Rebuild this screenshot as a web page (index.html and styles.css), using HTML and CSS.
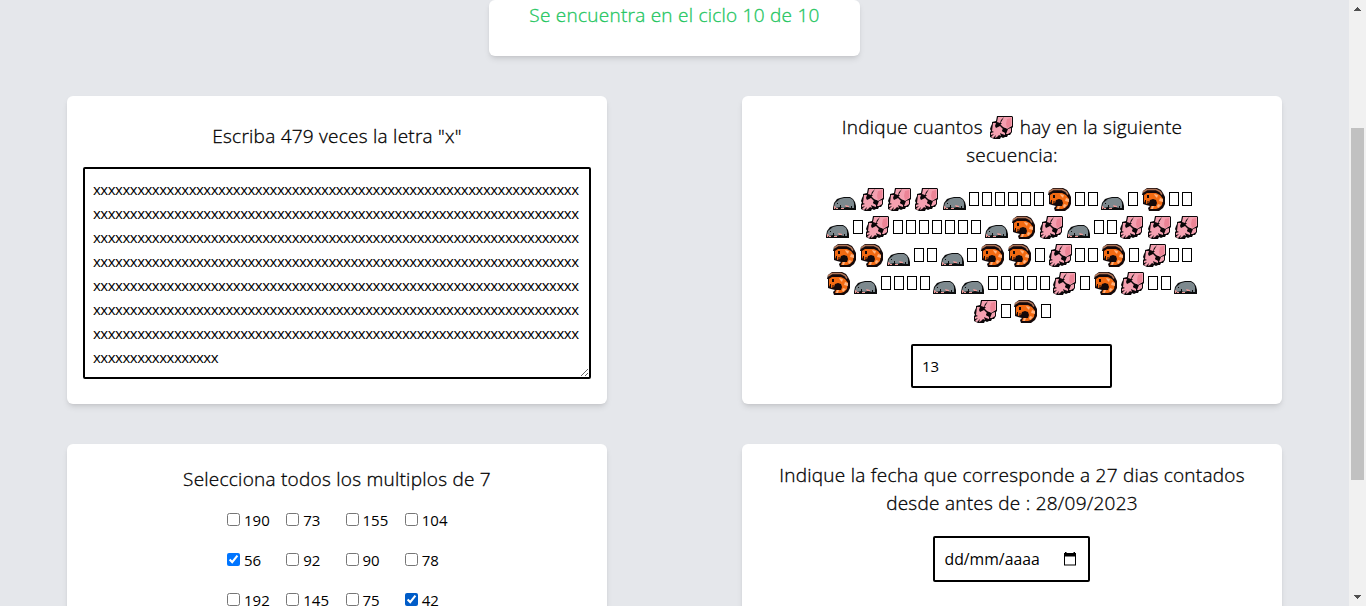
FILE: index.html
```html
<!DOCTYPE html>
<html lang="es">
<head>
<meta charset="utf-8">
<title>Ciclos</title>
<link rel="stylesheet" href="styles.css">
</head>
<body>
<svg class="sprites" aria-hidden="true">
  <symbol id="squid" viewBox="0 0 23 23">
    <path fill="#0b0709" d="M7 0h15l1 1v10l-1 1v4l-2 3h-2l-1 2h-2l-2 1-2-1-1 2H4l-2-1-2-1v-5l1-1-1-2 1-3 1-2V6l4-1z"/>
    <path fill="#f4a0b0" d="M8 1h6l-3 3-1 3-3-1zM14 1h8v9l-5 3-4-2-3-3zM3 7h3l-1 3 1 2 4-2 3 3-1 2 3 2v2l-3-1-2-1 1 3-2-1-2 2-2 1 1-3-3 3-2-1 3-3-3 1v-2l3-1-2-1zM18 13l3-1v4l-3 2h-2z"/>
    <path fill="#ec8496" d="M17 3l4-1v8l-4 2-1-4z"/>
    <path fill="#0b0709" d="M6 9l2-2 4 0-2 2-3 2zM12 14l3-2 2 1-2 3h-2z"/>
  </symbol>
  <symbol id="shrimp" viewBox="0 0 23 23">
    <path fill="#14090a" d="M1 3l4-3h10l4 2 2 3 2 4v7l-2 4-4 3H7l-1-3 2-2-4-1-3-1V7H0z"/>
    <path fill="#f36a12" d="M2 7l3-2h9l4 2 3 4-1 6-3 3-3 1H8l1-3h5l1-3-1-3-3-1-3 1-1 3-3 1-1-3-1 2z"/>
    <path fill="#ffb17d" d="M12 6l4 1-1 3-2-2zM18 10l3 1v3l-4-1zM16 16l3 1-3 3-1-2zM10 18h2l-1 3H9z"/>
    <path fill="none" stroke="#b07558" stroke-width="1.500" d="M1 4l4-2.500h9l4 2 2 3"/>
    <path fill="none" stroke="#14090a" d="M3 5l3-1h9l3 2M3.500 12v4M6 13v4M8.500 13v4"/>
    <path fill="#14090a" d="M5 7h2v3H5zM10 12h3l1 2-1 3h-3z"/>
  </symbol>
  <symbol id="mole" viewBox="0 0 23 14">
    <path fill="#0c0d0e" d="M7 1l4-1h6l3 2 2 3 1 4v4H0v-2l1-5 3-4z"/>
    <path fill="#7d898e" d="M7 2l4-1h6l3 2 1 3v5l-3 0-4-1-4 1-3-1-4 1-2-1 1-4z"/>
    <path fill="#f19a98" d="M1 9l2 1-1 2H1zM12 8l4 1v1h-3zM8 11h3v1H8zM3 11h2v1H3z"/>
    <path fill="#0c0d0e" d="M4 6h1v1H4zM7 8h1v3H7zM18 9h1v2h-1z"/>
  </symbol>
</svg>
<div class="window">
  <main class="page">
    <section class="card status"><p class="title">Se encuentra en el ciclo 10 de 10</p></section>
    <div class="grid">
      <section class="card write">
        <p class="title">Escriba 479 veces la letra "x"</p>
        <textarea class="field area" id="area"></textarea>
      </section>
      <section class="card count">
        <p class="title">Indique cuantos <svg class="squid"><use href="#squid"/></svg> hay en la siguiente<br>secuencia:</p>
        <div class="sequence" id="sequence"></div>
        <input class="field number" type="text" value="13">
      </section>
      <section class="card multiples">
        <p class="title">Selecciona todos los multiplos de 7</p>
        <div class="options">
          <label><input type="checkbox">190</label>
          <label><input type="checkbox">73</label>
          <label><input type="checkbox">155</label>
          <label><input type="checkbox">104</label>
          <label><input type="checkbox" checked>56</label>
          <label><input type="checkbox">92</label>
          <label><input type="checkbox">90</label>
          <label><input type="checkbox">78</label>
          <label><input type="checkbox">192</label>
          <label><input type="checkbox">145</label>
          <label><input type="checkbox">75</label>
          <label><input class="hovered" type="checkbox" checked>42</label>
        </div>
      </section>
      <section class="card date">
        <p class="title">Indique la fecha que corresponde a 27 dias contados<br>desde antes de : 28/09/2023</p>
        <div class="field datebox"><span>dd/mm/aaaa</span>
          <svg class="calendar" viewBox="0 0 14 14"><path d="M1 1h1V0h1.500v1h7V0H12v1h1v12.500H1zM2 4.500v8h10v-8z" fill-rule="evenodd"/></svg>
        </div>
      </section>
    </div>
  </main>
  <div class="scrollbar">
    <svg class="arrow" viewBox="0 0 7 4"><path d="M3 0h1v1h1v1h1v1h1v1H0V3h1V2h1V1h1z"/></svg>
    <div class="thumb"></div>
    <svg class="arrow" viewBox="0 0 7 4"><path d="M0 0h7v1H6v1H5v1H4v1H3V3H2V2H1V1H0z"/></svg>
  </div>
</div>
<script src="main.js"></script>
</body>
</html>
```
FILE: styles.css
```css
* { box-sizing: border-box; }
body { margin: 0; height: 606px; overflow: hidden; background: #e5e7eb; color: #000; font: 16px/24px "Open Sans", "Noto Sans", sans-serif; }
p { margin: 0; }
.sprites { display: none; }
.window { display: flex; height: 606px; overflow: hidden; }
.page { width: 1349px; height: 606px; overflow: hidden; }
.card { background: #fff; border-radius: 6px; box-shadow: 0 4px 6px -1px rgba(0,0,0,.1), 0 2px 4px -2px rgba(0,0,0,.1); }
.title { font-size: 19px; font-weight: 300; letter-spacing: .250px; -webkit-text-stroke: .3px currentColor; line-height: 28px; text-align: center; white-space: nowrap; }
.status { width: 371px; height: 56px; margin: 0 auto; padding-top: 1px; }
.status .title { color: #22c55e; }
.grid { display: grid; grid-template-columns: 540px 540px; grid-template-rows: 308px 308px; column-gap: 135px; row-gap: 40px; padding: 40px 67px; }
.grid .card { display: flex; flex-direction: column; align-items: center; padding: 16px; }
.field { border: 2px solid #000; border-radius: 2px; background: #fff; outline: 0; color: #000; font: inherit; }
.write .title { margin: 10px 0 17px; }
.area { display: block; width: 508px; height: 212px; padding: 8px; overflow: hidden; font-size: 15px; line-height: 24px; letter-spacing: -.495px; word-break: break-all; }
.count .title { padding-top: 1px; }
.squid, .shrimp { display: inline-block; width: 23px; height: 23px; margin: 0 2px; vertical-align: -5px; }
.title .squid { margin: 0 2px 0 1.500px; }
.sequence { margin: 16px 0 19px; }
.row { display: flex; justify-content: center; height: 28px; align-items: center; }
.row svg { flex: none; margin: 0 2.200px; }
.row .mole { width: 23px; height: 14px; margin-top: 9px; }
.box { width: 10px; height: 14px; margin: 0 1.500px; border: 1px solid #000; }
.number { width: 201px; height: 44px; margin-right: 1px; padding: 8px 9px; font-size: 15px; }
.multiples .title { margin-top: 5px; }
.options { display: grid; grid-template-columns: repeat(4, 59.250px); grid-auto-rows: 40px; width: 237px; margin: 7px 0 0 17px; }
.options label { display: flex; align-items: center; gap: 4px; font-size: 15px; }
.options input { width: 13px; height: 13px; margin: 0 0 2px; flex: none; accent-color: #0075ff; }
.options .hovered { accent-color: #005cc8; }
.date .title { padding-top: 1px; }
.datebox { display: flex; align-items: center; justify-content: space-between; width: 157px; height: 46px; margin: 19px 2px 0 0; padding: 0 11px 0 10px; font-size: 15.800px; }
.calendar { width: 14px; height: 14px; }
.scrollbar { width: 17px; height: 606px; background: #f1f1f1; display: flex; flex-direction: column; align-items: center; padding: 7px 0; }
.arrow { width: 7px; height: 4px; fill: #505050; flex: none; }
.thumb { width: 13px; height: 352px; margin: 117px 0 115px; background: #c1c1c1; flex: none; }
```
FILE: main.js
```js
// Letters: m = mole, s = squid, p = shrimp, . = empty glyph box
const rows = ["msssm......p..m.p..", "m.s.......mpsm..sss", "ppm..m.pp.s..p.s..", "pm....mm.....s.ps..m", "s.p."];
const names = { m: "mole", s: "squid", p: "shrimp" };
document.getElementById("sequence").innerHTML = rows.map(row =>
  '<div class="row">' + [...row].map(c => c === "."
    ? '<span class="box"></span>'
    : `<svg class="${names[c]}"><use href="#${names[c]}"/></svg>`).join("") + "</div>").join("");
document.getElementById("area").value = "x".repeat(479);
```
